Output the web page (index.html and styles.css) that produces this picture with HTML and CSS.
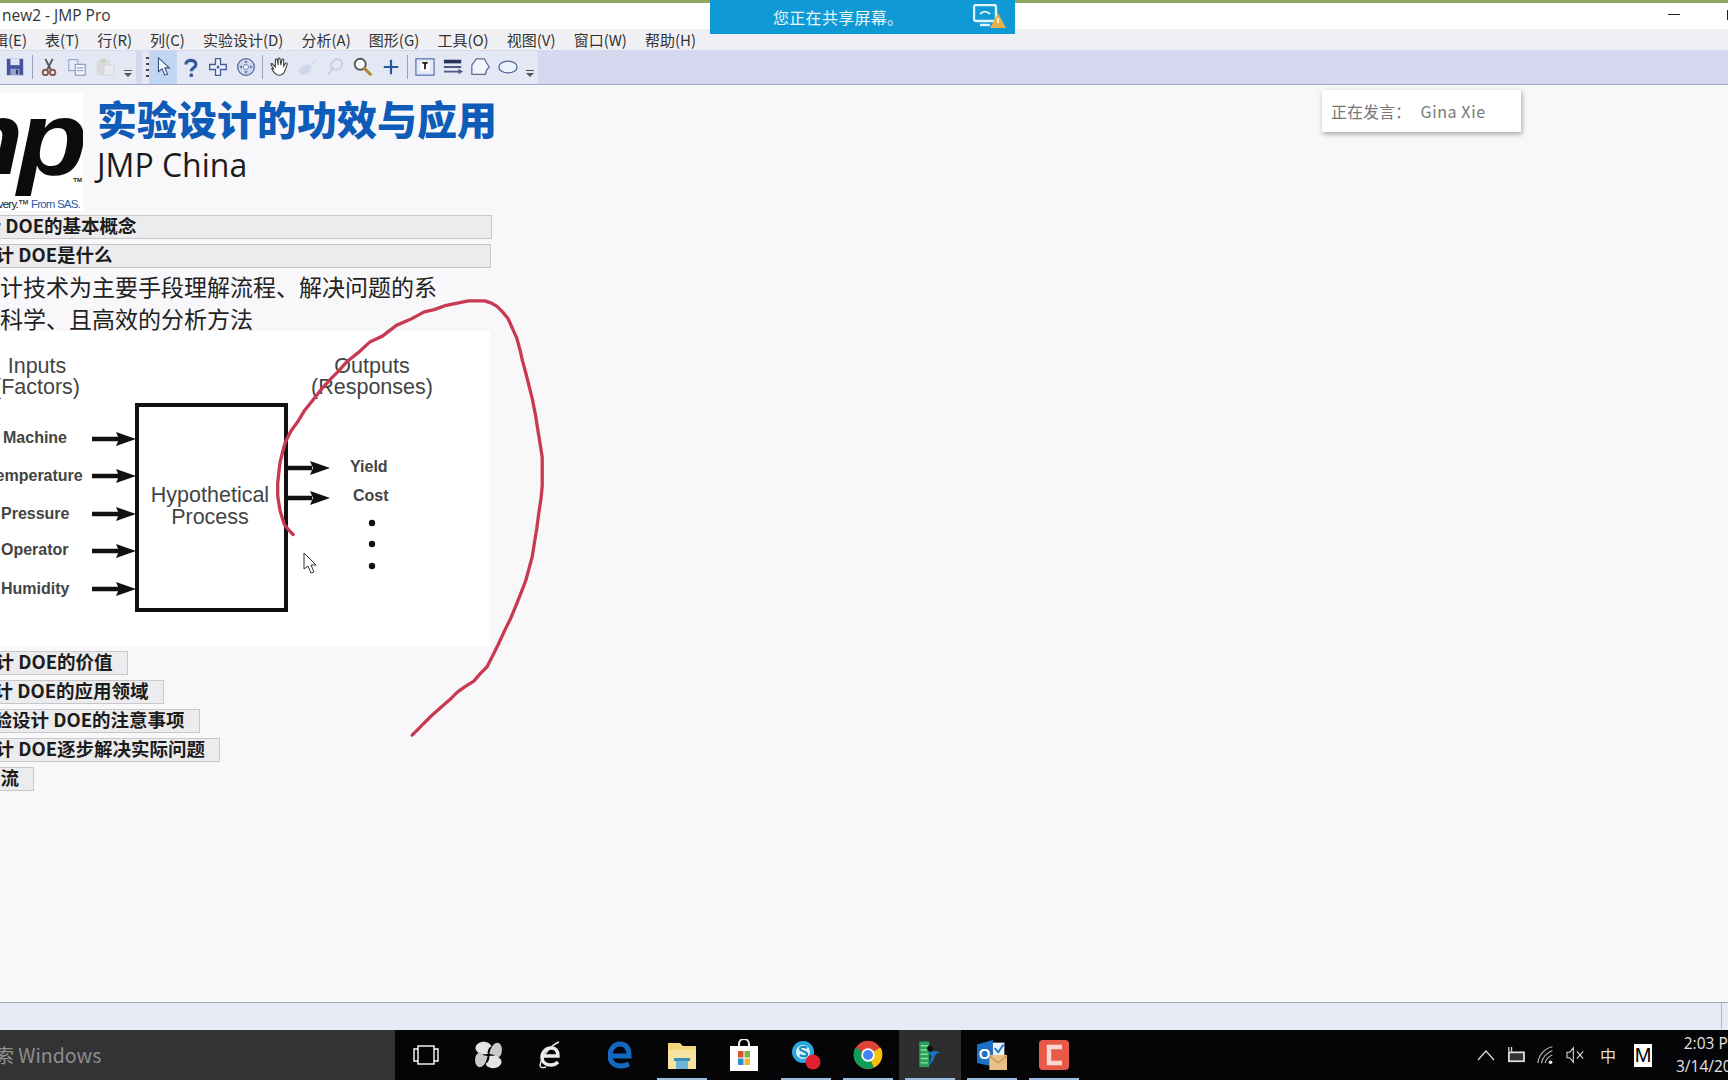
FILE: index.html
```html
<!DOCTYPE html>
<html lang="en">
<head>
  <meta charset="UTF-8" />
  <title>new2 - JMP Pro</title>
  <link rel="stylesheet" href="styles.css">
</head>
<body>
  <div class="window">
    <div class="titlebar">
      <span class="title-text">new2 - JMP Pro</span>
      <span class="win-min"></span>
      <span class="win-max"></span>
    </div>

    <div class="menubar">
      <span class="menu-first">编辑(E)</span>
      <span>表(T)</span>
      <span>行(R)</span>
      <span>列(C)</span>
      <span>实验设计(D)</span>
      <span>分析(A)</span>
      <span>图形(G)</span>
      <span>工具(O)</span>
      <span>视图(V)</span>
      <span>窗口(W)</span>
      <span>帮助(H)</span>
    </div>

    <div class="toolbar">
      <div class="tool-group group-a">
        <span class="tool">
          <svg width="20" height="20" viewBox="0 0 22 22"><rect x="2" y="2" width="18" height="18" fill="#44549c"/><rect x="6" y="2" width="10" height="7" fill="#dfe4f4"/><rect x="6" y="13" width="10" height="7" fill="#9aa4c8"/><rect x="12" y="14" width="2.5" height="5" fill="#333c70"/></svg>
        </span>
        <span class="sep"></span>
        <span class="tool">
          <svg width="20" height="20" viewBox="0 0 22 22" fill="none" stroke="#555"><path d="M7 2l6 12M15 2L9 14" stroke-width="2"/><circle cx="7" cy="17" r="3" stroke="#8a5a4a" stroke-width="2"/><circle cx="15" cy="17" r="3" stroke="#8a5a4a" stroke-width="2"/></svg>
        </span>
        <span class="tool">
          <svg width="20" height="20" viewBox="0 0 22 22"><rect x="2" y="3" width="10" height="12" fill="#e9edf8" stroke="#7d93c4"/><rect x="9" y="8" width="11" height="12" fill="#f2f4fb" stroke="#6b84ba"/><path d="M11 12h7M11 15h7" stroke="#7d93c4"/></svg>
        </span>
        <span class="tool tool-faded">
          <svg width="22" height="20" viewBox="0 0 24 22"><rect x="3" y="4" width="14" height="16" fill="#d9d6cc"/><rect x="7" y="2" width="6" height="4" fill="#c8c6bc"/><rect x="11" y="9" width="11" height="11" fill="#ececf0" stroke="#d0d0d8"/></svg>
        </span>
        <span class="drop"></span>
      </div>

      <div class="tool-group group-b">
        <span class="grip"></span>
        <span class="tool tool-on">
          <svg width="20" height="24" viewBox="0 0 22 26"><path d="M6 3v15l4-3 3 7 3-1-3-7h5z" fill="#f4f7fd" stroke="#3c4c78" stroke-width="1.2"/></svg>
        </span>
        <span class="tool">
          <svg width="17" height="21" viewBox="0 0 22 24" fill="none"><path d="M5 8c0-7 13-7 13 0 0 5-6 4-6 9" stroke="#34589c" stroke-width="4"/><circle cx="12" cy="22" r="2.4" fill="#34589c"/></svg>
        </span>
        <span class="tool">
          <svg width="20" height="20" viewBox="0 0 24 24"><path d="M9 2h6v7h7v6h-7v7H9v-7H2V9h7z" fill="#eef1fa" stroke="#44609c" stroke-width="1.6"/><circle cx="12" cy="12" r="1.8" fill="#44609c"/></svg>
        </span>
        <span class="tool">
          <svg width="20" height="20" viewBox="0 0 24 24"><circle cx="12" cy="12" r="10" fill="#d3daf0" stroke="#52699e" stroke-width="1.6"/><circle cx="12" cy="12" r="3" fill="#fff" stroke="#52699e"/><path d="M12 4l2 3h-4zM12 20l2-3h-4zM4 12l3-2v4zM20 12l-3-2v4z" fill="#52699e"/></svg>
        </span>
        <span class="sep"></span>
        <span class="tool">
          <svg width="22" height="22" viewBox="0 0 24 24" fill="#fff" stroke="#444" stroke-width="1.2"><path d="M5 14L2 9c0-1 2-1 2 0l3 3 0-8c0-1 2-1 2 0l1 6V3c0-1 2-1 2 0l1 7 1-6c0-1 2-1 2 0l0 7 2-3c1-1 2 0 2 1l-3 8c-1 2-3 4-6 4-4 0-6-3-8-7z"/></svg>
        </span>
        <span class="tool tool-faded">
          <svg width="22" height="22" viewBox="0 0 24 24"><ellipse cx="9" cy="15" rx="7" ry="5" transform="rotate(-35 9 15)" fill="#c8d2ea"/><path d="M14 10l6-7 2 2-6 7z" fill="#d8dce8"/></svg>
        </span>
        <span class="tool tool-faded">
          <svg width="20" height="20" viewBox="0 0 24 24" fill="none" stroke="#bcc3d2" stroke-width="2"><ellipse cx="14" cy="9" rx="7" ry="6" transform="rotate(-35 14 9)"/><path d="M9 14l-5 7"/></svg>
        </span>
        <span class="tool">
          <svg width="22" height="22" viewBox="0 0 24 24" fill="none"><circle cx="9" cy="9" r="6" fill="#fff" stroke="#555" stroke-width="2"/><path d="M13 13l8 8" stroke="#b38a2c" stroke-width="3.4"/></svg>
        </span>
        <span class="tool">
          <svg width="18" height="18" viewBox="0 0 20 20"><path d="M10 2v16M2 10h16" stroke="#24569c" stroke-width="2.4"/></svg>
        </span>
        <span class="sep"></span>
        <span class="tool">
          <svg width="22" height="20" viewBox="0 0 24 22"><rect x="2" y="2" width="20" height="18" fill="#e4eaf8" stroke="#5b78b0" stroke-width="1.4"/><rect x="7" y="5" width="10" height="10" fill="#fff"/><path d="M9 6.5h6M12 6.5v7" stroke="#222" stroke-width="2"/></svg>
        </span>
        <span class="tool">
          <svg width="22" height="20" viewBox="0 0 24 22"><rect x="2" y="3" width="19" height="4" fill="#27345e"/><path d="M2 11h19M2 16h17" stroke="#4b5a84" stroke-width="2"/><path d="M18 13l5 3-5 3z" fill="#4b5a84"/></svg>
        </span>
        <span class="tool">
          <svg width="22" height="20" viewBox="0 0 24 22"><path d="M3 19V9l5-7h9l2 4 3 5-3 4-1 4z" fill="#f3f5fb" stroke="#5a6c9c" stroke-width="1.4"/></svg>
        </span>
        <span class="tool">
          <svg width="22" height="20" viewBox="0 0 24 22"><ellipse cx="12" cy="11" rx="10" ry="6.5" fill="#eef2fb" stroke="#4d6494" stroke-width="1.4"/></svg>
        </span>
        <span class="drop"></span>
      </div>
    </div>

    <div class="doc">
      <div class="doc-head">
        <div class="logo">
          <span class="logo-mark">mp</span>
          <span class="logo-tm">TM</span>
          <span class="logo-line">Discovery.™ <b>From SAS.</b></span>
        </div>
        <div class="head-text">
          <h1 class="doc-title">实验设计的功效与应用</h1>
          <div class="doc-sub">JMP China</div>
        </div>
      </div>

      <div class="outline outline-wide outline-first">实验设计 DOE的基本概念</div>
      <div class="outline outline-wide outline-second">实验设计 DOE是什么</div>
      <p class="doc-line line-one">实验设计技术为主要手段理解流程、解决问题的系</p>
      <p class="doc-line line-two">统、科学、且高效的分析方法</p>

      <div class="figure">
        <svg class="figure-svg" width="490" height="315" viewBox="0 330 490 315">
          <defs>
            <path id="arrow-head" d="M0 0l-20-7 3 7-3 7z" fill="#111"/>
          </defs>
          <g class="fig-big" text-anchor="middle">
            <text x="37" y="372">Inputs</text>
            <text x="37" y="393">(Factors)</text>
            <text x="372" y="372">Outputs</text>
            <text x="372" y="393">(Responses)</text>
            <text x="210" y="501">Hypothetical</text>
            <text x="210" y="523">Process</text>
          </g>
          <g class="fig-small">
            <text x="3" y="442">Machine</text>
            <text x="-13" y="480">Temperature</text>
            <text x="1" y="518">Pressure</text>
            <text x="1" y="554">Operator</text>
            <text x="1" y="593">Humidity</text>
            <text x="350" y="471">Yield</text>
            <text x="353" y="500">Cost</text>
          </g>
          <rect x="137" y="404" width="149" height="205" fill="none" stroke="#111" stroke-width="4"/>
          <g stroke="#111" stroke-width="4.6">
            <path d="M92 438h36M92 475h36M92 513h36M92 550h36M92 588h36"/>
            <path d="M288 467h24M288 497h24"/>
          </g>
          <use href="#arrow-head" x="136" y="438"/>
          <use href="#arrow-head" x="136" y="475"/>
          <use href="#arrow-head" x="136" y="513"/>
          <use href="#arrow-head" x="136" y="550"/>
          <use href="#arrow-head" x="136" y="588"/>
          <use href="#arrow-head" x="330" y="467"/>
          <use href="#arrow-head" x="330" y="497"/>
          <circle cx="372" cy="522" r="3.2" fill="#111"/>
          <circle cx="372" cy="543" r="3.2" fill="#111"/>
          <circle cx="372" cy="565" r="3.2" fill="#111"/>
        </svg>
      </div>

      <div class="outline outline-short row-value">实验设计 DOE的价值</div>
      <div class="outline outline-short row-field">实验设计 DOE的应用领域</div>
      <div class="outline outline-short row-note">实验设计 DOE的注意事项</div>
      <div class="outline outline-short row-step">实验设计 DOE逐步解决实际问题</div>
      <div class="outline outline-short row-talk">交流</div>
    </div>

    <div class="statusbar"><span class="status-sep"></span></div>

    <div class="taskbar">
      <div class="search">搜索 Windows</div>
      <div class="task-slot slot-narrow">
        <svg width="26" height="20" viewBox="0 0 26 20" fill="none" stroke="#fff" stroke-width="1.4"><rect x="5" y="1" width="16" height="18"/><path d="M5 4H1v12h4M21 4h4v12h-4"/></svg>
      </div>
      <div class="task-slot slot-narrow">
        <svg width="29" height="28" viewBox="0 0 30 30"><path d="M14 14C8 15 2 13 1 8 1 3 7 0 12 1c4 1 6 3 6 5-3 1-4 4-4 8z" fill="#e4e4e6"/><path d="M16 14c1-6 4-12 9-12 4 1 5 6 4 11-1 3-3 5-6 5-1-3-4-4-7-4z" fill="#c9c9cc"/><path d="M14 16c-1 6-4 12-9 12-4-1-5-6-4-11 1-3 3-5 6-5 1 3 4 4 7 4z" fill="#c9c9cc"/><path d="M16 16c6-1 12 1 13 6 0 5-6 8-11 7-4-1-6-3-6-5 3-1 4-4 4-8z" fill="#e4e4e6"/></svg>
      </div>
      <div class="task-slot slot-narrow slot-last">
        <svg width="24" height="28" viewBox="0 0 24 28" fill="none" stroke="#ececec"><path d="M5 15h15C20 9 17 7 13 7 8 7 4 11 4 16c0 5 4 8 9 8 3 0 5-1 7-3" stroke-width="3.4"/><path d="M21 1C13 4 4 15 2 24c0 3 3 3 6 2" stroke-width="1.4"/></svg>
      </div>
      <div class="task-slot">
        <svg width="24" height="28" viewBox="0 0 24 28" fill="none"><path d="M3 15h18C21 7 18 3 12 3 6 3 2 8 2 15c0 7 5 10 11 10 3 0 6-1 8-2" stroke="#1568c0" stroke-width="5"/></svg>
      </div>
      <div class="task-slot">
        <svg width="30" height="28" viewBox="0 0 30 28"><path d="M1 2h12l3 3h13v24H1z" fill="#f2d67a"/><path d="M1 9h28v19H1z" fill="#f7e3a0"/><path d="M9 28v-8h12v8z" fill="#6cb4d8"/><path d="M7 17h16v3H7z" fill="#3a8dbd"/></svg>
        <span class="task-line"></span>
      </div>
      <div class="task-slot">
        <svg width="28" height="32" viewBox="0 0 28 32"><path d="M9 8V5a5 5 0 0 1 10 0v3" fill="none" stroke="#eee" stroke-width="2"/><rect x="0" y="7" width="28" height="25" fill="#fff"/><rect x="8" y="12" width="5.5" height="6.5" fill="#d9532c"/><rect x="14.5" y="12" width="5.5" height="6.5" fill="#7cb342"/><rect x="8" y="19.5" width="5.5" height="6.5" fill="#2a8fd6"/><rect x="14.5" y="19.5" width="5.5" height="6.5" fill="#f2b632"/></svg>
      </div>
      <div class="task-slot">
        <svg width="32" height="30" viewBox="0 0 32 30"><circle cx="13" cy="12" r="11" fill="#29a8e0"/><circle cx="13" cy="12" r="7" fill="#d8f0fa"/><path d="M17 8c-3-2-7-1-7 1 1 3 7 2 7 5 0 3-4 3-7 1" fill="none" stroke="#1a86c0" stroke-width="2.2"/><circle cx="23" cy="22" r="7.5" fill="#e5202e"/></svg>
        <span class="task-line"></span>
      </div>
      <div class="task-slot">
        <svg width="30" height="30" viewBox="0 0 36 36"><circle cx="18" cy="18" r="17" fill="#db4437"/><path d="M18 18L33 9a17 17 0 0 1-8 24z" fill="#f4c20d"/><path d="M18 18l7 15A17 17 0 0 1 3 9z" fill="#0f9d58"/><circle cx="18" cy="18" r="8" fill="#fff"/><circle cx="18" cy="18" r="6" fill="#4285f4"/></svg>
        <span class="task-line"></span>
      </div>
      <div class="task-slot slot-active">
        <svg width="28" height="30" viewBox="0 0 34 42"><rect x="2" y="2" width="14" height="36" fill="#2aa058"/><path d="M4 8h10M4 14h10M4 20h10M4 26h10M4 32h10" stroke="#8fdc9c" stroke-width="2"/><circle cx="17" cy="12" r="4" fill="#111"/><path d="M14 18c6-3 12-3 18-1-6 1-8 4-9 8-1 4-4 8-7 10 1-6 3-9 3-13z" fill="#1877c2"/></svg>
        <span class="task-line"></span>
      </div>
      <div class="task-slot">
        <svg width="32" height="30" viewBox="0 0 36 34"><path d="M1 5l18-5v30L1 26z" fill="#1a70c4"/><text x="3" y="21" class="outlook-o">O</text><rect x="19" y="3" width="13" height="15" fill="#e8f2fa"/><path d="M21 9l4 5 6-9" fill="none" stroke="#1a70c4" stroke-width="2"/><rect x="15" y="17" width="20" height="17" fill="#e8c088"/><path d="M15 18l10 8 10-8" fill="none" stroke="#c8985c" stroke-width="1.6"/></svg>
        <span class="task-line"></span>
      </div>
      <div class="task-slot">
        <svg width="30" height="30" viewBox="0 0 30 30"><rect x="0" y="0" width="30" height="30" rx="4" fill="#e85a48"/><path d="M23 7H10v16h13" fill="none" stroke="#f9d9d2" stroke-width="4.4"/></svg>
        <span class="task-line"></span>
      </div>

      <div class="tray">
        <span class="tray-item">
          <svg width="18" height="12" viewBox="0 0 18 12" fill="none" stroke="#ddd" stroke-width="1.2"><path d="M1 11l8-9 8 9"/></svg>
        </span>
        <span class="tray-item">
          <svg width="22" height="16" viewBox="0 0 24 18"><rect x="3" y="5" width="19" height="12" fill="#ddd"/><rect x="5" y="7" width="15" height="8" fill="#333"/><path d="M4 0v5M7 0v5" stroke="#ddd" stroke-width="1.4"/></svg>
        </span>
        <span class="tray-item">
          <svg width="20" height="20" viewBox="0 0 22 22" fill="none" stroke="#bbb" stroke-width="1.2"><path d="M2 20C3 11 9 4 18 2M6 20c1-6 5-11 12-14M10 20c1-4 3-7 8-9"/><circle cx="16" cy="19" r="2" fill="#eee" stroke="none"/></svg>
        </span>
        <span class="tray-item">
          <svg width="20" height="18" viewBox="0 0 22 20" fill="none" stroke="#ddd" stroke-width="1.2"><path d="M1 7h3l4-5v16l-4-5H1zM12 6l7 8M19 6l-7 8"/></svg>
        </span>
        <span class="tray-item tray-ime">中</span>
        <span class="tray-item tray-m-slot"><span class="tray-m">M</span></span>
        <div class="clock">
          <div>2:03 PM</div>
          <div>3/14/2019</div>
        </div>
      </div>
    </div>

    <div class="share-banner">
      <span class="share-text">您正在共享屏幕。</span>
      <svg class="share-icon" width="34" height="26" viewBox="0 0 34 26"><rect x="1" y="1" width="22" height="16" rx="2" fill="none" stroke="#dff3fb" stroke-width="2.4"/><path d="M7 10c3-3 7-3 10 0" fill="none" stroke="#dff3fb" stroke-width="2"/><path d="M7 21h10" stroke="#dff3fb" stroke-width="2.4"/><path d="M25 9l8 15H17z" fill="#e8b04a"/><path d="M25 14v5" stroke="#fff" stroke-width="1.6"/></svg>
    </div>

    <div class="speaker">正在发言： <span class="speaker-name">Gina Xie</span></div>

    <svg class="ink" width="1728" height="1080" viewBox="0 0 1568 980" fill="none">
      <polyline points="266,485 262,481 258,476 254,463 252,450 252,438 254,420 257,408 259,401 264,391 270,383 276,373 284,363 291,354 299,345 307,337 315,328 325,320 336,310 347,305 360,295 372,290 385,283 394,281 405,277 415,275 425,273 440,273 446,275 451,278 456,283 461,289 465,298 469,307 472,318 474,327 477,338 480,350 483,362 486,377 488,390 490,402 492,415 492,428 492,441 491,452 489,465 487,480 485,492 483,505 480,516 477,527 472,540 468,550 463,562 458,572 452,585 447,595 442,605 436,611 430,618 422,623 415,628 408,635 400,642 392,649 385,656 379,662 374,667" stroke="#c83a52" stroke-width="3" stroke-linejoin="round" stroke-linecap="round"/>
    </svg>
    <svg class="cursor" width="14" height="22" viewBox="0 0 14 22"><path d="M1 1v16l4-3 3 7 3-1-3-7h5z" fill="#fff" stroke="#333" stroke-width="1"/></svg>
  </div>
</body>
</html>
```

FILE: styles.css
```css
html, body {
  margin: 0;
  padding: 0;
  background: #f8f8fa;
  overflow: hidden;
}

.window {
  position: relative;
  width: 1728px;
  height: 1080px;
  display: flex;
  flex-direction: column;
  overflow: hidden;
  font-family: "Noto Sans CJK SC", "Open Sans", sans-serif;
  color: #222;
}

.titlebar {
  height: 23px;
  flex: none;
  border-top: 3px solid #8fa862;
  background: #fff;
  display: flex;
  align-items: center;
  padding-left: 2px;
  padding-bottom: 3px;
}

.title-text {
  font-family: "Open Sans", sans-serif;
  font-size: 15.5px;
  color: #333;
}

.win-min {
  width: 12px;
  height: 1px;
  background: #222;
  margin-left: auto;
  margin-right: 47px;
}

.win-max {
  width: 1px;
  height: 10px;
  background: #222;
}

.menubar {
  height: 21px;
  flex: none;
  background: #f0f0f4;
  display: flex;
  align-items: center;
  gap: 18.1px;
  font-size: 15px;
  line-height: 21px;
  color: #333;
}

.menu-first {
  margin-left: -22px;
}

.toolbar {
  height: 34px;
  flex: none;
  background: #d5d8ee;
  border-bottom: 1px solid #a8a5c5;
  display: flex;
  align-items: center;
  gap: 6px;
}

.tool-group {
  height: 33px;
  display: flex;
  align-items: center;
  background: #e4e7f4;
  border-radius: 0 3px 3px 0;
}

.group-a {
  width: 136px;
  padding-left: 1px;
  box-sizing: border-box;
}

.group-b {
  width: 396px;
  padding-left: 4px;
  box-sizing: border-box;
}

.tool {
  width: 27.6px;
  height: 33px;
  flex: none;
  display: flex;
  align-items: center;
  justify-content: center;
}

.tool-on {
  background: #c0d6f2;
}

.tool-faded {
  opacity: 0.75;
}

.sep {
  width: 1px;
  height: 24px;
  flex: none;
  margin: 0 3px;
  background: #9ca0b8;
}

.grip {
  width: 3px;
  height: 20px;
  flex: none;
  background: repeating-linear-gradient(to bottom, #444 0 2px, transparent 2px 6px);
}

.drop {
  width: 8px;
  height: 8px;
  flex: none;
  margin: 14px 4px 0 auto;
  border-top: 1px solid #555;
  position: relative;
}

.drop::after {
  content: "";
  position: absolute;
  left: 0;
  top: 2px;
  border-left: 4px solid transparent;
  border-right: 4px solid transparent;
  border-top: 4px solid #555;
}

.doc {
  flex: 1;
  min-height: 0;
  background: #f8f8fa;
  padding-top: 8px;
}

.doc-head {
  display: flex;
  height: 122px;
}

.logo {
  position: relative;
  width: 83px;
  height: 118px;
  flex: none;
  background: #fff;
  overflow: hidden;
}

.logo-mark {
  position: absolute;
  right: 1px;
  top: -15px;
  font-family: "Liberation Sans", sans-serif;
  font-weight: bold;
  font-style: italic;
  font-size: 104px;
  letter-spacing: -5px;
  line-height: 120px;
  color: #0c0c0c;
  transform: scaleX(1.1);
  transform-origin: right center;
}

.logo-tm {
  position: absolute;
  right: 1px;
  top: 84px;
  font-family: "Liberation Sans", sans-serif;
  font-weight: bold;
  font-size: 6px;
}

.logo-line {
  position: absolute;
  right: 3px;
  bottom: 1px;
  font-family: "Liberation Sans", sans-serif;
  font-size: 11.5px;
  letter-spacing: -0.8px;
  white-space: nowrap;
}

.logo-line b {
  color: #2a5ca8;
  font-weight: normal;
}

.head-text {
  margin-left: 14px;
}

.doc-title {
  margin: -3px 0 0;
  font-size: 40px;
  line-height: 56px;
  font-weight: 900;
  color: #0f5cb8;
  white-space: nowrap;
}

.doc-sub {
  font-family: "Open Sans", sans-serif;
  font-size: 32px;
  line-height: 40px;
  color: #1c1c1c;
  margin-top: -1px;
}

.outline {
  box-sizing: border-box;
  height: 24px;
  line-height: 19px;
  font-size: 18.5px;
  font-weight: 700;
  color: #1c1c1c;
  white-space: nowrap;
  background: #ececee;
  border: 1px solid #c8c8cc;
}

.outline-short {
  width: fit-content;
  padding-right: 14px;
  margin-bottom: 5px;
}

.outline-first {
  width: 566px;
  margin-left: -74px;
  margin-bottom: 5px;
}

.outline-second {
  width: 552px;
  margin-left: -61px;
}

.doc-line {
  margin: 0;
  font-size: 23px;
  line-height: 32px;
  color: #222;
  white-space: nowrap;
}

.line-one {
  margin-top: 2px;
  margin-left: -69px;
}

.line-two {
  margin-left: -46px;
}

.figure {
  width: 490px;
  height: 315px;
  background: #fff;
  margin-top: -3px;
  margin-bottom: 5px;
}

.figure-svg {
  display: block;
}

.fig-big {
  font-family: "Liberation Sans", sans-serif;
  font-size: 21.5px;
  fill: #444;
}

.fig-small {
  font-family: "Liberation Sans", sans-serif;
  font-size: 16px;
  font-weight: bold;
  fill: #444;
}

.row-value { margin-left: -61px; }
.row-field { margin-left: -62px; }
.row-note { margin-left: -26px; }
.row-step { margin-left: -61px; }
.row-talk { margin-left: -19px; }

.statusbar {
  height: 27px;
  flex: none;
  background: #e8ebf6;
  border-top: 1px solid #a8a8b0;
  display: flex;
  justify-content: flex-end;
}

.status-sep {
  width: 1px;
  height: 26px;
  background: #b4b6c4;
  margin-right: 6px;
}

.taskbar {
  height: 50px;
  flex: none;
  background: #050508;
  display: flex;
  align-items: stretch;
}

.search {
  flex: none;
  box-sizing: border-box;
  background: #333335;
  color: #8e8e8e;
  font-size: 19.5px;
  line-height: 50px;
  white-space: nowrap;
  margin-left: -25px;
  width: 420px;
}

.task-slot {
  position: relative;
  width: 62px;
  flex: none;
  display: flex;
  align-items: center;
  justify-content: center;
}

.slot-last {
  margin-right: 8px;
}

.slot-active {
  background: #2e2e30;
}

.task-line {
  position: absolute;
  left: 6px;
  right: 6px;
  bottom: 0;
  height: 2px;
  background: #9cbce0;
}

.outlook-o {
  font-family: "Liberation Sans", sans-serif;
  font-weight: bold;
  font-size: 17px;
  fill: #fff;
}

.tray {
  display: flex;
  align-items: center;
  margin-left: 386px;
  flex: none;
}

.tray-item {
  width: 30px;
  flex: none;
  display: flex;
  justify-content: center;
  color: #ddd;
  font-size: 16px;
}

.tray-ime {
  margin-left: 2px;
}

.tray-m-slot {
  margin-left: 5px;
}

.tray-m {
  width: 18px;
  height: 23px;
  background: #fff;
  color: #000;
  font-family: "Liberation Sans", sans-serif;
  font-size: 20px;
  line-height: 23px;
  text-align: center;
}

.clock {
  margin-left: 18px;
  color: #e4e4e4;
  font-family: "Open Sans", sans-serif;
  font-size: 15.5px;
  line-height: 23px;
  text-align: center;
  white-space: nowrap;
}

.share-banner {
  position: absolute;
  left: 710px;
  top: 0;
  width: 305px;
  height: 34px;
  background: #0f9ad6;
  color: #e8f6fc;
  font-size: 16px;
  line-height: 32px;
  display: flex;
  align-items: center;
  padding-left: 63px;
  box-sizing: border-box;
}

.share-text {
  letter-spacing: 0.3px;
}

.share-icon {
  margin-left: 70px;
}

.speaker {
  position: absolute;
  left: 1322px;
  top: 90px;
  width: 199px;
  height: 42px;
  box-sizing: border-box;
  padding-left: 9px;
  background: #fff;
  box-shadow: 1px 2px 5px rgba(0, 0, 0, 0.35);
  color: #777;
  font-size: 16px;
  line-height: 42px;
  white-space: nowrap;
}

.speaker-name {
  margin-left: 6px;
  letter-spacing: 0.6px;
}

.ink {
  position: absolute;
  left: 0;
  top: 0;
  pointer-events: none;
}

.cursor {
  position: absolute;
  left: 303px;
  top: 552px;
}
```
